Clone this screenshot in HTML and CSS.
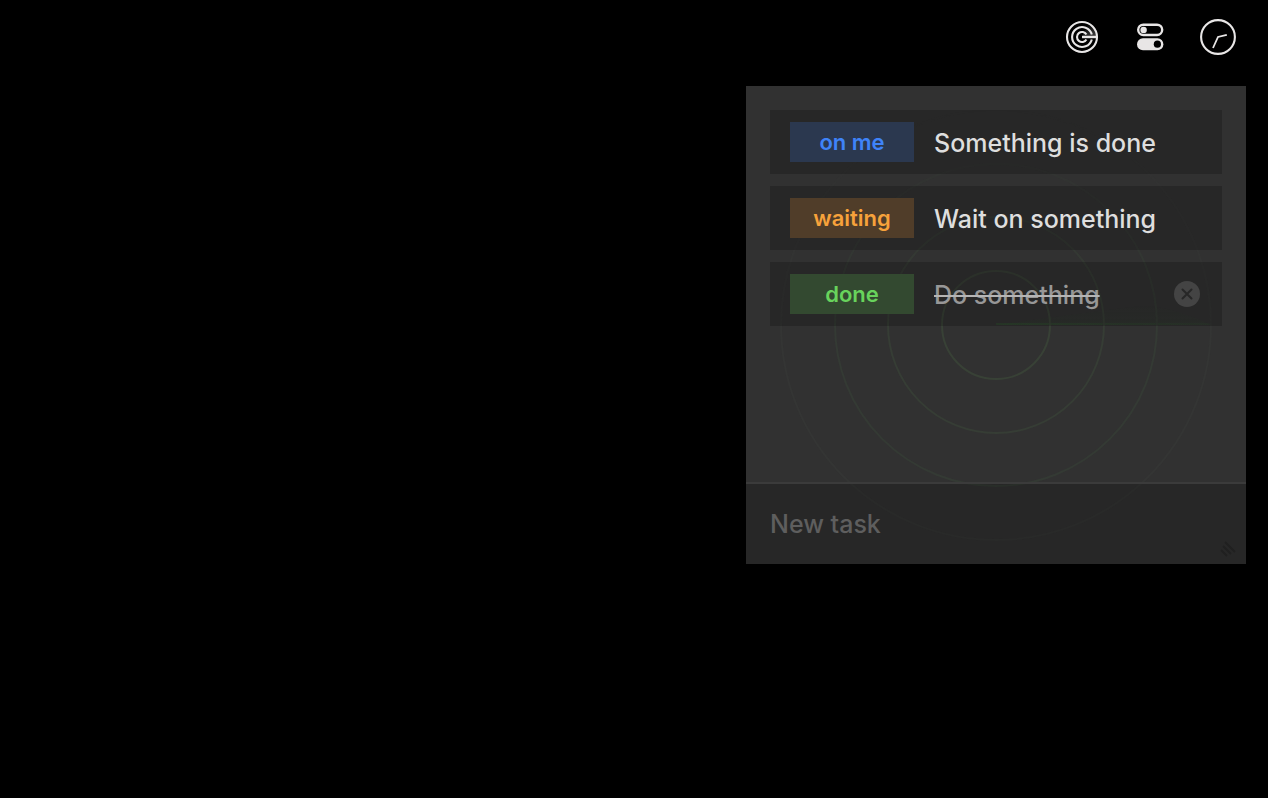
FILE: index.html
```html
<!DOCTYPE html>
<html lang="en">
<head>
<meta charset="utf-8">
<meta name="viewport" content="width=device-width, initial-scale=1">
<title>Tasks</title>
<link rel="stylesheet" href="styles.css">
</head>
<body>
<header class="menubar">
  <button class="menu-icon" type="button" aria-label="Tasks">
    <svg width="36" height="36" viewBox="0 0 36 36" fill="none" stroke="#e8e6e6" stroke-width="2.1">
      <defs>
        <linearGradient id="sweep" x1="0" y1="0" x2=".6" y2="1">
          <stop offset=".2" stop-color="#e8e6e6" stop-opacity="0"/>
          <stop offset="1" stop-color="#e8e6e6" stop-opacity=".25"/>
        </linearGradient>
      </defs>
      <path d="M18 18L24 5A14 14 0 0 1 32 18Z" fill="url(#sweep)" stroke="none"/>
      <circle cx="18" cy="18" r="15"/>
      <path d="M27.8 20.4A10 10 0 1 1 27.8 15.6"/>
      <path d="M22.4 20.4A5 5 0 1 1 22.4 15.6"/>
      <path d="M18 18H33" stroke-width="2.4"/>
    </svg>
  </button>
  <button class="menu-icon" type="button" aria-label="Control center">
    <svg width="36" height="36" viewBox="0 0 36 36" fill="none">
      <rect x="6.2" y="5.7" width="24" height="10.3" rx="5.15" stroke="#e8e6e6" stroke-width="2.4"/>
      <circle cx="11.6" cy="10.9" r="3.2" fill="#e8e6e6"/>
      <rect x="5" y="19.3" width="26.4" height="11.9" rx="5.95" fill="#e8e6e6"/>
      <circle cx="25.4" cy="25.2" r="3.6" fill="#000"/>
    </svg>
  </button>
  <button class="menu-icon" type="button" aria-label="Clock">
    <svg width="36" height="36" viewBox="0 0 36 36" fill="none" stroke="#e8e6e6" stroke-width="2.1">
      <circle cx="18" cy="18" r="16.9"/>
      <path d="M26.8 15.8L18 18L13 29" stroke-width="1.8"/>
    </svg>
  </button>
</header>
<main class="panel">
  <svg class="radar" viewBox="0 0 500 478" preserveAspectRatio="xMidYMid slice" fill="none" stroke-width="2" aria-hidden="true">
    <defs>
      <linearGradient id="beam" x1="0" y1="0" x2="1" y2="0">
        <stop offset="0" stop-color="#2d7a2d" stop-opacity=".22"/>
        <stop offset="1" stop-color="#2d7a2d" stop-opacity=".06"/>
      </linearGradient>
      <linearGradient id="glow" x1="0" y1="0" x2="0" y2="1">
        <stop offset="0" stop-color="#2d7a2d" stop-opacity="0"/>
        <stop offset="1" stop-color="#2d7a2d" stop-opacity=".06"/>
      </linearGradient>
    </defs>
    <path d="M250 239L400 219A215 215 0 0 1 465 239Z" fill="url(#glow)"/>
    <rect x="250" y="237" width="215" height="2" fill="url(#beam)"/>
    <circle cx="250" cy="239" r="54" stroke="#384136"/>
    <circle cx="250" cy="239" r="108" stroke="#363d35"/>
    <circle cx="250" cy="239" r="161" stroke="#343a34"/>
    <circle cx="250" cy="239" r="215" stroke="#343534"/>
  </svg>
  <ul class="tasks">
    <li class="task">
      <button class="status status-me" type="button">on me</button>
      <span class="title">Something is done</span>
    </li>
    <li class="task">
      <button class="status status-waiting" type="button">waiting</button>
      <span class="title">Wait on something</span>
    </li>
    <li class="task">
      <button class="status status-done" type="button">done</button>
      <span class="title"><s class="finished">Do something</s></span>
      <button class="remove" type="button" aria-label="Remove task">
        <svg width="26" height="26" viewBox="0 0 26 26" fill="none">
          <circle cx="13" cy="13" r="13" fill="#444"/>
          <path d="M8.5 8.5L17.5 17.5M17.5 8.5L8.5 17.5" stroke="#272727" stroke-width="2" stroke-linecap="round"/>
        </svg>
      </button>
    </li>
  </ul>
  <form class="composer">
    <input class="new-task" type="text" placeholder="New task" aria-label="New task">
    <svg class="grip" width="16" height="16" viewBox="0 0 16 16" stroke="#202020" stroke-width="2" aria-hidden="true">
      <path d="M5 1L15 11M3 5L11 13M1 9L7 15"/>
    </svg>
  </form>
</main>
</body>
</html>
```
FILE: styles.css
```css
* {
  box-sizing: border-box;
}

body {
  margin: 0;
  min-height: 100vh;
  background: #000;
  color: #dedede;
  font-family: Inter, "Liberation Sans", sans-serif;
  font-size: 25px;
  font-weight: 500;
  line-height: 32px;
  padding: 0 22px;
}

button {
  border: 0;
  padding: 0;
  background: none;
  font: inherit;
  cursor: pointer;
}

svg {
  display: block;
}

.menubar {
  display: flex;
  justify-content: flex-end;
  gap: 32px;
  padding: 19px 10px 31px;
}

.panel {
  position: relative;
  display: flex;
  flex-direction: column;
  width: 100%;
  max-width: 500px;
  min-height: 478px;
  margin-left: auto;
  background: #313131;
  overflow: hidden;
}

.radar {
  position: absolute;
  inset: 0;
  width: 100%;
  height: 100%;
  mask-image: linear-gradient(transparent 5%, #000 50%);
}

.tasks {
  position: relative;
  flex: 1;
  display: flex;
  flex-direction: column;
  gap: 12px;
  margin: 0;
  padding: 24px;
  list-style: none;
}

.task {
  display: flex;
  align-items: center;
  gap: 20px;
  padding: 12px 22px 12px 20px;
  background: rgba(0, 0, 0, 0.2);
}

.status {
  width: 124px;
  height: 40px;
  font-size: 22px;
  line-height: 40px;
  font-weight: 600;
}

.status-me {
  background: #2b384f;
  color: #3f83f8;
}

.status-waiting {
  background: #503d29;
  color: #f7a23b;
}

.status-done {
  background: #334930;
  color: #68d35c;
}

.title {
  flex: 1;
  padding-top: 2px;
  white-space: nowrap;
}

.finished {
  color: #979797;
  text-decoration: line-through 2px #b5b5b5;
}

.composer {
  position: relative;
  border-top: 2px solid #3b3b3b;
  background: rgba(0, 0, 0, 0.2);
  background-clip: padding-box;
}

.new-task {
  display: block;
  width: 100%;
  height: 80px;
  padding: 0 24px;
  border: 0;
  outline: 0;
  background: none;
  color: inherit;
  font: inherit;
}

.new-task::placeholder {
  color: #5e5e5e;
  opacity: 1;
}

.grip {
  position: absolute;
  right: 10px;
  bottom: 7px;
}
```
